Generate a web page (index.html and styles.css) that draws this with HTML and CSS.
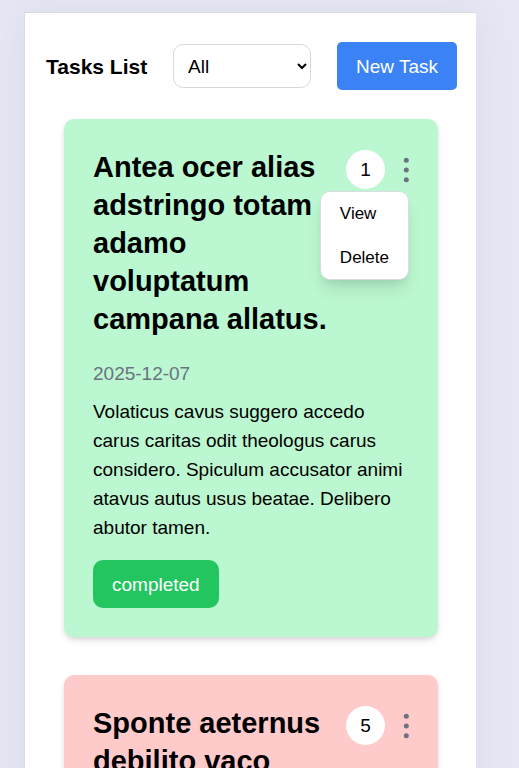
FILE: index.html
```html
<!DOCTYPE html>
<html lang="en">
<head>
<meta charset="utf-8">
<meta name="viewport" content="width=device-width, initial-scale=1">
<title>Tasks List</title>
<link rel="stylesheet" href="styles.css">
</head>
<body>
<main class="panel">
  <header class="toolbar">
    <h1 class="toolbar-title">Tasks List</h1>
    <select class="filter" aria-label="Filter tasks">
      <option>All</option>
    </select>
    <button class="new-task" type="button">New Task</button>
  </header>
  <section class="tasks">
    <article class="card card-done">
      <div class="card-head">
        <h2 class="card-title">Antea ocer alias adstringo totam adamo voluptatum campana allatus.</h2>
        <div class="actions">
          <span class="priority">1</span>
          <button class="kebab" type="button" aria-label="Task menu">
            <svg class="dots" viewBox="0 0 6 26"><circle cx="3.3" cy="3.3" r="2.5"/><circle cx="3.3" cy="13" r="2.5"/><circle cx="3.3" cy="22.7" r="2.5"/></svg>
          </button>
          <div class="menu">
            <button class="menu-item" type="button">View</button>
            <button class="menu-item" type="button">Delete</button>
          </div>
        </div>
      </div>
      <time class="date">2025-12-07</time>
      <p class="text">Volaticus cavus suggero accedo carus caritas odit theologus carus considero. Spiculum accusator animi atavus autus usus beatae. Delibero abutor tamen.</p>
      <button class="status" type="button">completed</button>
    </article>
    <article class="card card-open">
      <div class="card-head">
        <h2 class="card-title">Sponte aeternus debilito vaco</h2>
        <div class="actions">
          <span class="priority">5</span>
          <button class="kebab" type="button" aria-label="Task menu">
            <svg class="dots" viewBox="0 0 6 26"><circle cx="3.3" cy="3.3" r="2.5"/><circle cx="3.3" cy="13" r="2.5"/><circle cx="3.3" cy="22.7" r="2.5"/></svg>
          </button>
        </div>
      </div>
    </article>
  </section>
</main>
</body>
</html>
```
FILE: styles.css
```css
* {
  box-sizing: border-box;
}

body {
  margin: 0;
  padding: 12px 43px 0 24px;
  height: 100vh;
  overflow: hidden;
  background: #e5e7f4;
  color: #000;
  font: 19px/29px "Liberation Sans", Arial, sans-serif;
}

h1, h2, p {
  margin: 0;
}

button, select {
  font: inherit;
  color: inherit;
}

button {
  border: 0;
  cursor: pointer;
}

.panel {
  min-height: 100%;
  padding: 29px 19px 29px 21px;
  background: #fff;
  border: 1px solid #d9dbe0;
  border-right: 0;
  box-shadow: 0 0 40px rgba(0, 0, 0, 0.05);
}

.toolbar {
  display: flex;
  align-items: center;
  justify-content: space-between;
  gap: 19px;
}

.toolbar-title {
  font-size: 21px;
  line-height: 29px;
  white-space: nowrap;
}

.filter {
  flex: 0 1 138px;
  min-width: 0;
  height: 44px;
  padding: 0 0 0 10px;
  background: #fff;
  border: 1px solid #d6d8df;
  border-radius: 10px;
}

.new-task {
  height: 48px;
  padding: 0 19px;
  background: #3b82f6;
  border-radius: 5px;
  color: #fff;
  white-space: nowrap;
}

.tasks {
  display: grid;
  gap: 38px;
  padding: 29px 19px 0 18px;
}

.card {
  padding: 29px;
  border-radius: 10px;
  box-shadow: 0 4px 7px -1px rgba(0, 0, 0, 0.12), 0 2px 5px -1px rgba(0, 0, 0, 0.08);
}

.card-done {
  background: #bbf7d0;
}

.card-open {
  background: #fecaca;
}

.card-head {
  display: flex;
  align-items: flex-start;
  justify-content: space-between;
  gap: 16px;
  margin-bottom: 21px;
}

.card-title {
  font-size: 29px;
  line-height: 38px;
}

.actions {
  position: relative;
  display: flex;
  align-items: center;
  gap: 18px;
  height: 43px;
}

.priority {
  display: grid;
  place-items: center;
  width: 39px;
  height: 39px;
  border-radius: 50%;
  background: #fff;
}

.kebab {
  padding: 0;
  background: none;
}

.dots {
  display: block;
  width: 6px;
  height: 26px;
  fill: #6b7280;
}

.menu {
  position: absolute;
  top: 100%;
  right: 0;
  display: grid;
  gap: 1px;
  border: 1px solid #d9dce1;
  border-radius: 10px;
  background: #fff;
  box-shadow: 0 12px 18px -4px rgba(0, 0, 0, 0.12), 0 5px 7px -2px rgba(0, 0, 0, 0.06);
}

.menu-item {
  height: 43px;
  padding: 0 19px;
  background: none;
  font-size: 17px;
  text-align: left;
}

.date {
  display: block;
  margin-bottom: 9px;
  color: #6b7280;
}

.text {
  margin-bottom: 18px;
}

.status {
  display: block;
  height: 48px;
  padding: 0 19px;
  background: #22c55e;
  border-radius: 10px;
  color: #fff;
}
```
